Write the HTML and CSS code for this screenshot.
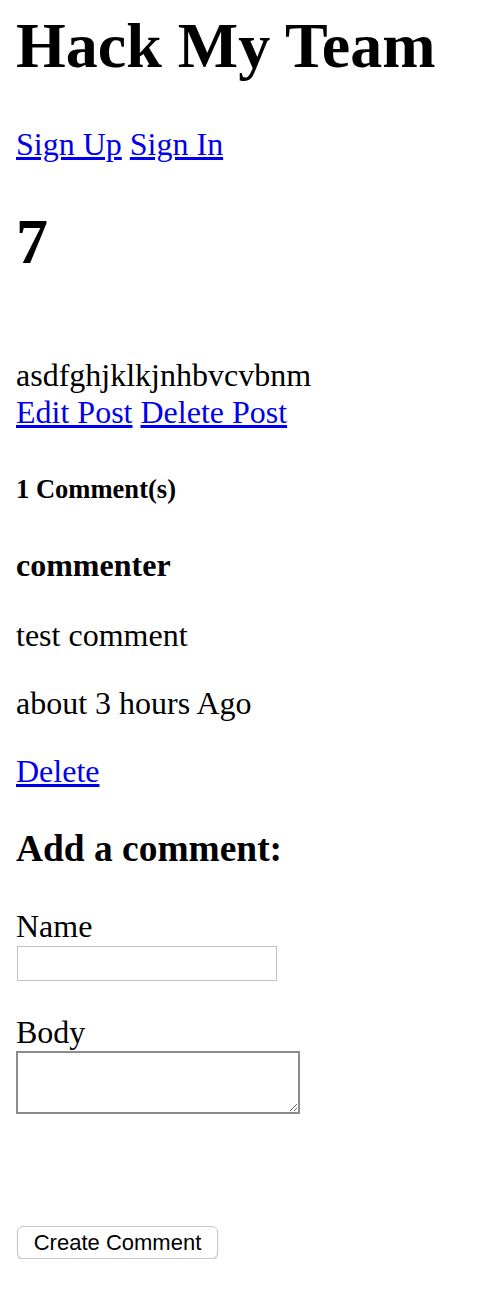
FILE: index.html
```html
<!DOCTYPE html>
<html lang="en">
<head>
<meta charset="utf-8">
<title>Hack My Team</title>
<link rel="stylesheet" href="styles.css">
</head>
<body>
<h1 class="site-title">Hack My Team</h1>
<nav class="auth-links"><a href="#">Sign Up</a> <a href="#">Sign In</a></nav>
<h1 class="post-title">7</h1>
<div class="post-body">asdfghjklkjnhbvcvbnm<br><a href="#">Edit Post</a> <a href="#">Delete Post</a></div>
<h5 class="comment-count">1 Comment(s)</h5>
<h4 class="comment-author">commenter</h4>
<p class="comment-text">test comment</p>
<p class="comment-time">about 3 hours Ago</p>
<p class="comment-actions"><a href="#">Delete</a></p>
<h3 class="form-title">Add a comment:</h3>
<form class="comment-form">
  <div class="field field-name">
    <label class="field-label" for="name">Name</label>
    <input class="text-input" id="name" type="text">
  </div>
  <div class="field field-body">
    <label class="field-label" for="body">Body</label>
    <textarea class="text-area" id="body"></textarea>
  </div>
  <div class="actions">
    <button class="submit-button" type="submit">Create Comment</button>
  </div>
</form>
</body>
</html>
```

FILE: styles.css
```css
html {
  background: #ffffff;
}

body {
  margin: 9px 16px 0;
  font-family: "Liberation Serif", "Times New Roman", serif;
  font-size: 32px;
  line-height: normal;
  color: #000000;
}

a {
  color: #0000ee;
  text-decoration: underline;
}

.site-title {
  margin: 0;
  font-size: 64px;
  font-weight: bold;
}

.auth-links {
  margin-top: 42.5px;
}

.post-title {
  margin: 42.5px 0 0;
  font-size: 64px;
  font-weight: bold;
}

.post-body {
  margin-top: 77.5px;
}

.comment-count {
  margin: 43.5px 0 0;
  font-size: 26.56px;
  font-weight: bold;
}

.comment-author {
  margin: 42px 0 0;
  font-size: 32px;
  font-weight: bold;
}

.comment-text {
  margin: 32.5px 0 0;
}

.comment-time {
  margin: 31.5px 0 0;
}

.comment-actions {
  margin: 30.5px 0 0;
}

.form-title {
  margin: 37.5px 0 0;
  font-size: 37.44px;
  font-weight: bold;
}

.comment-form {
  margin: 0;
}

.field-name {
  margin-top: 37.5px;
}

.field-body {
  margin-top: 32.5px;
}

.field-label {
  display: block;
}

.text-input {
  display: block;
  box-sizing: border-box;
  width: 260px;
  height: 35px;
  margin: 1.5px 0 0 1px;
  padding: 0 4px;
  border: 1px solid #c2c2c2;
  background: #ffffff;
  font-family: "Liberation Sans", Arial, sans-serif;
  font-size: 22px;
}

.text-area {
  display: block;
  box-sizing: border-box;
  width: 284px;
  height: 63px;
  margin: 0.5px 0 0;
  padding: 2px;
  border: 2px solid #8c8c8c;
  background: #ffffff;
  font-family: "Liberation Mono", monospace;
  font-size: 22px;
}

.actions {
  display: flex;
  margin-top: 112px;
}

.submit-button {
  box-sizing: border-box;
  width: 201px;
  height: 33px;
  margin-left: 1px;
  padding: 0;
  border: 1px solid #c8c8c8;
  border-radius: 6px;
  background: #ffffff;
  box-shadow: 0 1px 1px rgba(0, 0, 0, 0.18);
  color: #000000;
  font-family: "Liberation Sans", Arial, sans-serif;
  font-size: 22px;
}
```
